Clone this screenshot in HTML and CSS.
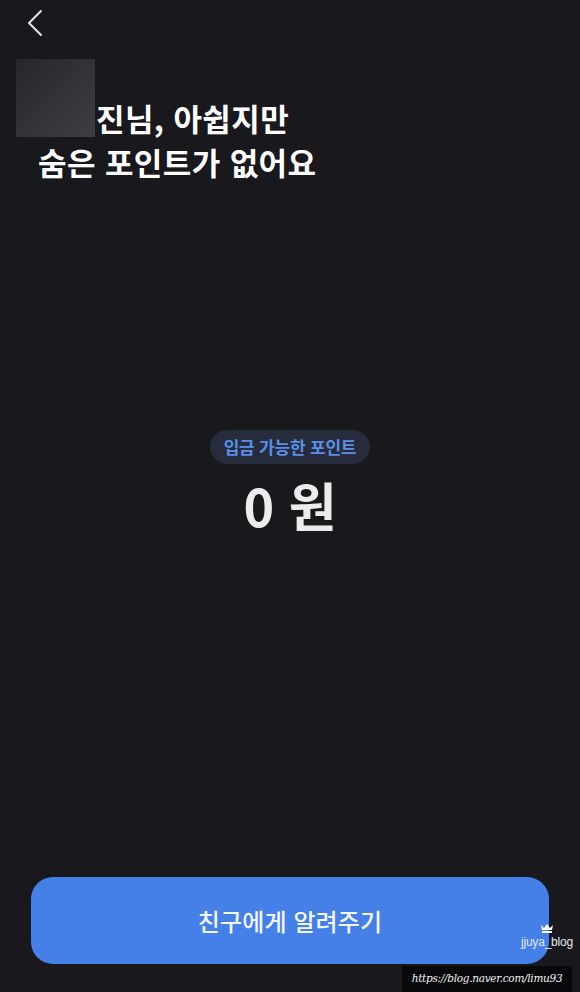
FILE: index.html
```html
<!DOCTYPE html>
<html lang="ko">
<head>
<meta charset="utf-8">
<link rel="stylesheet" href="styles.css">
</head>
<body>
<div class="screen">
  <header class="topbar">
    <svg class="back" width="18" height="28" viewBox="0 0 18 28" fill="none">
      <path d="M15 2 L3 14 L15 26" stroke="#e4e4e6" stroke-width="2" stroke-linecap="round" stroke-linejoin="round"/>
    </svg>
  </header>
  <section class="title">
    <div class="line1">
      <span class="masked"></span>
      <span class="t1">진님, 아쉽지만</span>
    </div>
    <div class="line2">숨은 포인트가 없어요</div>
  </section>
  <section class="points">
    <span class="pill">입금 가능한 포인트</span>
    <div class="amount">0 원</div>
  </section>
  <div class="spacer"></div>
  <button class="cta">친구에게 알려주기</button>
  <div class="mark">
    <svg class="crown" width="14" height="9" viewBox="0 0 14 9"><path d="M1 1 L4 4 L7 0 L10 4 L13 1 L12 6 L2 6 Z M2 7 H12 V9 H2 Z" fill="#ffffff"/></svg>
    <span class="mark-name">jjuya_blog</span>
  </div>
  <div class="url">https://blog.naver.com/limu93</div>
</div>
</body>
</html>
```
FILE: styles.css
```css
html, body {
  margin: 0;
  padding: 0;
  background: #18181d;
}
body {
  font-family: "Noto Sans CJK KR", "Noto Sans", sans-serif;
  color: #ffffff;
}
.screen {
  position: relative;
  width: 580px;
  height: 992px;
  display: flex;
  flex-direction: column;
  overflow: hidden;
}
.topbar {
  height: 59px;
  display: flex;
  align-items: flex-start;
  padding-left: 26px;
  padding-top: 9px;
  box-sizing: border-box;
}
.back {
  display: block;
}
.title {
  padding-left: 16px;
  font-weight: 700;
  font-size: 31px;
  letter-spacing: 0.4px;
}
.line1 {
  display: flex;
  align-items: flex-end;
  height: 78px;
}
.masked {
  width: 79px;
  height: 78px;
  background: linear-gradient(135deg, #26262b 0%, #333338 55%, #3d3d42 100%);
  filter: blur(0.6px);
  flex: none;
}
.t1 {
  line-height: 40px;
  margin-left: 1px;
  margin-bottom: -1px;
}
.line2 {
  padding-left: 22px;
  line-height: 44px;
  margin-top: 3px;
}
.points {
  margin-top: 246px;
  display: flex;
  flex-direction: column;
  align-items: center;
}
.pill {
  display: inline-block;
  height: 34px;
  line-height: 34px;
  padding: 0 14px;
  border-radius: 17px;
  background: #262c3c;
  color: #5b8fea;
  font-size: 17px;
  font-weight: 700;
  letter-spacing: -0.2px;
}
.amount {
  margin-top: 8px;
  font-size: 52px;
  font-weight: 700;
  line-height: 66px;
  color: #ececec;
  letter-spacing: 0;
}
.spacer {
  flex: 1;
}
.cta {
  margin: 0 31px 28px 31px;
  height: 87px;
  border: none;
  border-radius: 22px;
  background: #4580e8;
  color: #f4f7fe;
  font-family: "Noto Sans CJK KR", "Noto Sans", sans-serif;
  font-size: 24px;
  font-weight: 500;
  letter-spacing: 0.1px;
  padding: 0;
}
.mark {
  position: absolute;
  left: 519px;
  top: 924px;
  width: 56px;
  display: flex;
  flex-direction: column;
  align-items: center;
  line-height: 1;
}
.crown {
  display: block;
}
.mark-name {
  font-family: "Liberation Sans", sans-serif;
  font-size: 12px;
  color: #e6e6ea;
  margin-top: 3px;
  letter-spacing: -0.2px;
}
.url {
  position: absolute;
  left: 402px;
  top: 966px;
  width: 170px;
  height: 26px;
  background: #08080a;
  color: #f2f2f2;
  font-family: "DejaVu Serif", serif;
  font-style: italic;
  font-size: 10.5px;
  line-height: 24px;
  text-align: center;
  letter-spacing: -0.3px;
}
```
